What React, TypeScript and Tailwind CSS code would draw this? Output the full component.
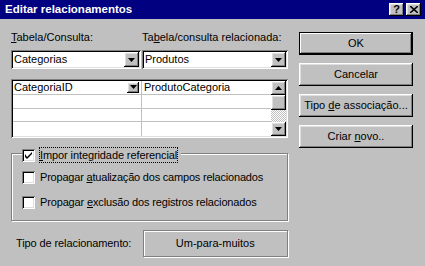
const raised =
  "shadow-[inset_-1px_-1px_#000,inset_1px_1px_#fff,inset_-2px_-2px_#808080,inset_2px_2px_#dfdfdf]";
const sunken =
  "shadow-[inset_1px_1px_#808080,inset_-1px_-1px_#fff,inset_2px_2px_#000,inset_-2px_-2px_#dfdfdf]";

function Arrow({ up = false }: { up?: boolean }) {
  return (
    <svg width="7" height="4" viewBox="0 0 7 4" className="block">
      {up ? <path d="M3.5 0 L7 4 L0 4 Z" fill="#000" /> : <path d="M0 0 H7 L3.5 4 Z" fill="#000" />}
    </svg>
  );
}

function ArrowButton({ up = false, className = "" }: { up?: boolean; className?: string }) {
  return (
    <div className={`bg-[#c0c0c0] flex items-center justify-center ${raised} ${className}`}>
      <Arrow up={up} />
    </div>
  );
}

function Combo({ value }: { value: string }) {
  return (
    <div className={`h-[19px] bg-white flex items-center p-[2px] ${sunken}`}>
      <span className="flex-1 pl-[1px] leading-none">{value}</span>
      <ArrowButton className="w-[15px] h-[15px]" />
    </div>
  );
}

function Checkbox({ checked = false }: { checked?: boolean }) {
  return (
    <div className={`w-[13px] h-[13px] bg-white shrink-0 flex items-center justify-center ${sunken}`}>
      {checked ? (
        <svg width="7" height="7" viewBox="0 0 7 7" className="block">
          <path d="M0 2 L0 5 L2 7 L7 2 L7 0 L2 5 Z" fill="#000" />
        </svg>
      ) : null}
    </div>
  );
}

function Button({ children, isDefault = false }: { children: React.ReactNode; isDefault?: boolean }) {
  return (
    <div
      className={`h-[23px] flex items-center justify-center bg-[#c0c0c0] ${
        isDefault
          ? "border border-black shadow-[inset_-1px_-1px_#000,inset_1px_1px_#fff,inset_-2px_-2px_#808080]"
          : raised
      }`}
    >
      {children}
    </div>
  );
}

export default function App() {
  return (
    <div className="w-[425px] h-[266px] bg-[#c0c0c0] text-black text-[11px] font-['Liberation_Sans',Arial,sans-serif] flex flex-col overflow-hidden">
      {/* title bar */}
      <div className="h-[19px] bg-[#000080] flex items-center pl-[5px] pr-[4px] shrink-0">
        <span className="flex-1 text-white font-bold text-[11.5px] pt-[1px]">Editar relacionamentos</span>
        <div className="flex gap-[2px]">
          <div className={`w-[15px] h-[13px] bg-[#c0c0c0] flex items-center justify-center font-bold text-[11px] leading-none ${raised}`}>
            ?
          </div>
          <div className={`w-[15px] h-[13px] bg-[#c0c0c0] flex items-center justify-center ${raised}`}>
            <svg width="8" height="7" viewBox="0 0 8 7" className="block">
              <path d="M0 0 L8 7 M8 0 L0 7" stroke="#000" strokeWidth="1.6" />
            </svg>
          </div>
        </div>
      </div>

      <div className="flex pl-[11px]">
        {/* left column */}
        <div className="w-[277px] flex flex-col pt-[12px]">
          <div className="grid grid-cols-[131px_1fr] h-[13px] leading-[13px]">
            <span>
              <u>T</u>abela/Consulta:
            </span>
            <span>
              Ta<u>b</u>ela/consulta relacionada:
            </span>
          </div>
          <div className="grid grid-cols-[130px_1fr] gap-[1px] mt-[6px]">
            <Combo value="Categorias" />
            <Combo value="Produtos" />
          </div>

          {/* field grid */}
          <div className={`mt-[10px] h-[59px] bg-white p-[2px] flex ${sunken}`}>
            <div className="flex-1 flex flex-col">
              {[0, 1, 2, 3].map((r) => (
                <div key={r} className="h-[14px] flex border-b border-[#c0c0c0] last:border-b-0">
                  <div className="w-[129px] border-r border-[#c0c0c0] flex items-center pl-[1px]">
                    {r === 0 ? (
                      <>
                        <span className="flex-1 leading-none">CategoriaID</span>
                        <ArrowButton className="w-[12px] h-[11px] mr-[2px]" />
                      </>
                    ) : null}
                  </div>
                  <div className="flex-1 flex items-center pl-[2px]">
                    {r === 0 ? <span className="leading-none">ProdutoCategoria</span> : null}
                  </div>
                </div>
              ))}
            </div>
            <div className="w-[15px] flex flex-col">
              <ArrowButton up className="h-[14px]" />
              <div className={`h-[15px] bg-[#c0c0c0] ${raised}`} />
              <div className="flex-1 bg-[repeating-conic-gradient(#c0c0c0_0%_25%,#fff_0%_50%)] bg-[length:2px_2px]" />
              <ArrowButton className="h-[14px]" />
            </div>
          </div>

          {/* group box */}
          <div className="mt-[15px] h-[68px] border border-[#808080] shadow-[inset_1px_1px_#fff,1px_1px_#fff] flex flex-col pl-[10px]">
            <div className="-mt-[7px] self-start flex items-center bg-[#c0c0c0] pr-[3px]">
              <Checkbox checked />
              <span className="ml-[4px] px-[1px] h-[16px] leading-[16px] tracking-[-0.1px] outline outline-1 outline-dotted outline-black -outline-offset-1">
                <u>I</u>mpor integridade referencial
              </span>
            </div>
            <div className="mt-[8px] flex items-center">
              <Checkbox />
              <span className="ml-[5px] leading-none tracking-[-0.2px]">
                Propagar <u>a</u>tualização dos campos relacionados
              </span>
            </div>
            <div className="mt-[12px] flex items-center">
              <Checkbox />
              <span className="ml-[5px] leading-none tracking-[-0.15px]">
                Propagar <u>e</u>xclusão dos registros relacionados
              </span>
            </div>
          </div>

          {/* relationship type */}
          <div className="mt-[9px] flex items-center">
            <span className="w-[132px] pl-[5px] tracking-[-0.1px]">Tipo de relacionamento:</span>
            <div className="w-[146px] h-[27px] border border-[#808080] shadow-[inset_1px_1px_#fff,1px_1px_#fff] flex items-center justify-center">
              Um-para-muitos
            </div>
          </div>
        </div>

        {/* right column */}
        <div className="ml-[11px] w-[114px] pt-[13px] flex flex-col gap-[8px]">
          <Button isDefault>OK</Button>
          <Button>Cancelar</Button>
          <Button>
            <span>
              Tipo <u>d</u>e associação...
            </span>
          </Button>
          <Button>
            <span>
              Criar <u>n</u>ovo..
            </span>
          </Button>
        </div>
      </div>
    </div>
  );
}
